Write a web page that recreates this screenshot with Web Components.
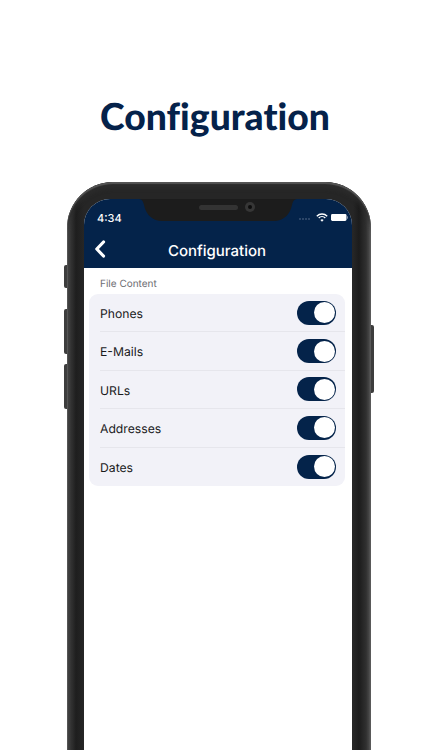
<!DOCTYPE html>
<html>
<head>
<meta charset="utf-8">
<style>
  html, body { margin: 0; padding: 0; background: #fff; height: 100%; overflow: hidden; text-rendering: geometricPrecision; }
</style>
</head>
<body>
<app-page>
  <phone-frame>
    <nav-bar title="Configuration"></nav-bar>
    <settings-group label="File Content">
      <settings-row>Phones</settings-row>
      <settings-row>E-Mails</settings-row>
      <settings-row>URLs</settings-row>
      <settings-row>Addresses</settings-row>
      <settings-row last>Dates</settings-row>
    </settings-group>
  </phone-frame>
</app-page>
<script>
class AppPage extends HTMLElement {
  connectedCallback() {
    this.attachShadow({ mode: 'open' });
    this.shadowRoot.innerHTML = `
      <style>
        :host { display: block; width: 422px; height: 750px; overflow: hidden; background: #fff; }
        h1 {
          margin: 0 0 0 8px;
          padding-top: 93px;
          height: 89px;
          text-align: center;
          font: 900 37.3px/46px Lato, sans-serif;
          font-variant-ligatures: none;
          color: #05224a;
        }
      </style>
      <h1>Configuration</h1>
      <slot></slot>
    `;
  }
}

class PhoneFrame extends HTMLElement {
  connectedCallback() {
    this.attachShadow({ mode: 'open' });
    this.shadowRoot.innerHTML = `
      <style>
        :host { display: block; position: relative; width: 304px; height: 568px; margin-left: 67px; }
        .body {
          box-sizing: border-box;
          height: 100%;
          padding: 17px 19px 0 17px;
          border-radius: 46px 46px 0 0;
          background: linear-gradient(90deg, #8a8a8a 0, #444 1.5px, #333 4px, #1e1e1e 9px, #262626 17px, #262626 286px, #1c1c1c 292px, #303030 299px, #4a4a4a 302px, #8a8a8a 304px);
          box-shadow: inset 0 2px 1px #555, inset 0 6px 4px #2c2c2c;
        }
        .screen {
          position: relative;
          height: 100%;
          background: #fff;
          border-radius: 26px 26px 0 0;
          overflow: hidden;
        }
        .btn { position: absolute; background: #3d3d3d; width: 3px; }
        .b1 { left: -3px; top: 83px; height: 23px; border-radius: 2px 0 0 2px; }
        .b2 { left: -3px; top: 127px; height: 45px; border-radius: 2px 0 0 2px; }
        .b3 { left: -3px; top: 182px; height: 45px; border-radius: 2px 0 0 2px; }
        .b4 { right: -3px; top: 143px; height: 68px; border-radius: 0 2px 2px 0; }
        .notch { position: absolute; top: 0; left: 54px; width: 160px; height: 22px; }
        .notch svg { display: block; }
        .speaker {
          position: absolute; left: 61px; top: 6px; width: 39px; height: 5px;
          border-radius: 3px; background: #333;
        }
        .camera {
          position: absolute; left: 107px; top: 3px; width: 10px; height: 10px;
          border-radius: 50%; background: #363636;
        }
        .camera::after {
          content: ''; position: absolute; left: 3px; top: 3px; width: 4px; height: 4px;
          border-radius: 50%; background: #0c0c0c;
        }
      </style>
      <div class="btn b1"></div><div class="btn b2"></div><div class="btn b3"></div><div class="btn b4"></div>
      <div class="body">
        <div class="screen">
          <slot></slot>
          <div class="notch">
            <svg width="160" height="22" viewBox="0 0 160 22"><path d="M0 0C4 0 5 2 6 6 8 16 15 22 24 22H136C145 22 152 16 154 6 155 2 156 0 160 0Z" fill="#1c1c1c"/></svg>
            <div class="speaker"></div><div class="camera"></div>
          </div>
        </div>
      </div>
    `;
  }
}

class NavBar extends HTMLElement {
  connectedCallback() {
    this.attachShadow({ mode: 'open' });
    this.shadowRoot.innerHTML = `
      <style>
        :host { display: block; height: 69px; background: #04234a; color: #fff; font-family: Inter, "Liberation Sans", sans-serif; }
        .status {
          height: 33px; box-sizing: border-box; padding: 4px 0 0 13px;
          display: flex; align-items: center; justify-content: space-between;
          font-size: 11px; font-weight: 500; line-height: 14px;
        }
        .icons { display: flex; align-items: center; gap: 3px; padding-right: 4px; }
        .bar {
          height: 36px; display: flex; align-items: center; justify-content: center;
          position: relative; font-size: 15px; font-weight: 500; padding-right: 2px;
        }
        .back { position: absolute; left: 10px; top: 8px; }
      </style>
      <div class="status">
        <span>4:34</span>
        <span class="icons">
          <svg width="14" height="6" viewBox="0 0 14 6"><g fill="#5d7390"><circle cx="1" cy="4" r=".8"/><circle cx="4" cy="4" r=".8"/><circle cx="7" cy="4" r=".8"/><circle cx="10" cy="4" r=".8"/></g></svg>
          <svg width="12" height="9" viewBox="0 0 12 9" fill="none" stroke="#fff" stroke-width="1.4"><path d="M.8 3.2a7.4 7.4 0 0 1 10.4 0"/><path d="M2.7 5a4.7 4.7 0 0 1 6.6 0"/><path d="M6 8.8 4.4 6.9a2.3 2.3 0 0 1 3.2 0z" fill="#fff" stroke="none"/></svg>
          <svg width="17" height="7" viewBox="0 0 17 7"><rect width="15.5" height="7" rx="1.4" fill="#fff"/><rect x="16" y="2.3" width="1" height="2.4" fill="#7f90a8"/></svg>
        </span>
      </div>
      <div class="bar">
        <svg class="back" width="12" height="18" viewBox="0 0 12 18" fill="none" stroke="#fff" stroke-width="3.2" stroke-linecap="round" stroke-linejoin="round"><path d="M9.5 2 2.8 9l6.7 7"/></svg>
        <span>${this.getAttribute('title')}</span>
      </div>
    `;
  }
}

class SettingsGroup extends HTMLElement {
  connectedCallback() {
    this.attachShadow({ mode: 'open' });
    this.shadowRoot.innerHTML = `
      <style>
        :host { display: block; padding: 0 7px 0 5px; font-family: Inter, "Liberation Sans", sans-serif; }
        .label { height: 26px; padding: 10px 0 0 11px; box-sizing: border-box; font-size: 10px; line-height: 13px; color: #6d6d72; }
        .card { background: #f2f2f8; border-radius: 9px; padding-left: 11px; }
      </style>
      <div class="label">${this.getAttribute('label')}</div>
      <div class="card"><slot></slot></div>
    `;
  }
}

class SettingsRow extends HTMLElement {
  connectedCallback() {
    this.attachShadow({ mode: 'open' });
    this.shadowRoot.innerHTML = `
      <style>
        :host { display: block; font-size: 12.2px; color: #1a1a1c; }
        .row {
          height: 38.4px; box-sizing: border-box; padding-right: 9px;
          display: flex; align-items: center; justify-content: space-between;
          border-bottom: 1px solid #e6e6ec;
        }
        .row span { padding-top: 1.5px; }
        :host([last]) .row { border-bottom: 0; }
      </style>
      <div class="row"><span><slot></slot></span><toggle-switch></toggle-switch></div>
    `;
  }
}

class ToggleSwitch extends HTMLElement {
  connectedCallback() {
    this.attachShadow({ mode: 'open' });
    this.shadowRoot.innerHTML = `
      <style>
        :host { display: block; position: relative; width: 39px; height: 24px; border-radius: 12px; background: #04234a; }
        .knob {
          position: absolute; right: 1.5px; top: 1.5px; width: 21px; height: 21px;
          border-radius: 50%; background: #fff;
        }
      </style>
      <div class="knob"></div>
    `;
  }
}

customElements.define('app-page', AppPage);
customElements.define('phone-frame', PhoneFrame);
customElements.define('nav-bar', NavBar);
customElements.define('settings-group', SettingsGroup);
customElements.define('settings-row', SettingsRow);
customElements.define('toggle-switch', ToggleSwitch);
</script>
</body>
</html>
